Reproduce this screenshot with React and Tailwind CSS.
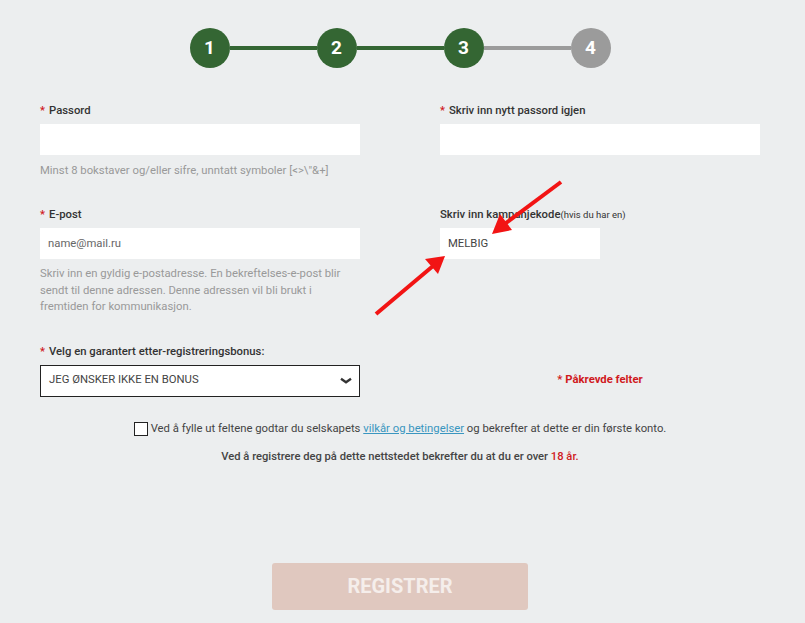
import { useState } from "react"

function Step({ n, done }) {
    return (
        <div className={`w-10 h-10 rounded-full flex items-center justify-center text-white text-[19px] font-bold ${done ? "bg-[#346633]" : "bg-[#9b9b9b]"}`}>
            {n}
        </div>
    )
}

function Label({ children, req = true }) {
    return (
        <div className="h-4 text-[11.3px] leading-4 font-medium text-[#333]">
            {req && <span className="text-[#d0191d] mr-1">*</span>}
            {children}
        </div>
    )
}

export default function App() {
    const [agree, setAgree] = useState(false)

    return (
        <div className="relative w-[805px] h-[623px] bg-[#eceeef] font-['Roboto',_sans-serif] overflow-hidden">
            <div className="w-[800px]">
                <div className="flex items-center justify-center pt-7">
                    <Step n="1" done />
                    <div className="w-[87px] h-1 bg-[#346633]" />
                    <Step n="2" done />
                    <div className="w-[87px] h-1 bg-[#346633]" />
                    <Step n="3" done />
                    <div className="w-[87px] h-1 bg-[#9b9b9b]" />
                    <Step n="4" />
                </div>

                <div className="grid grid-cols-[320px_320px] gap-x-20 px-10 mt-[35px]">
                    <div>
                        <Label>Passord</Label>
                        <input type="password" className="block w-full h-[31px] mt-[5px] bg-white outline-none px-2" />
                        <div className="mt-2 text-[11.3px] leading-4 text-[#999]">Minst 8 bokstaver og/eller sifre, unntatt symboler [&lt;&gt;\"&amp;+]</div>
                    </div>
                    <div>
                        <Label>Skriv inn nytt passord igjen</Label>
                        <input type="password" className="block w-full h-[31px] mt-[5px] bg-white outline-none px-2" />
                    </div>

                    <div className="mt-7">
                        <Label>E-post</Label>
                        <input placeholder="name@mail.ru" className="block w-full h-[31px] mt-[5px] bg-white outline-none px-2 text-[11.3px] text-[#555] placeholder:text-[#666]" />
                        <div className="mt-[7px] text-[11.3px] leading-[16.5px] text-[#999]">
                            Skriv inn en gyldig e-postadresse. En bekreftelses-e-post blir sendt til denne adressen. Denne adressen vil bli brukt i fremtiden for kommunikasjon.
                        </div>
                    </div>
                    <div className="mt-7">
                        <div className="h-4 text-[11.3px] leading-4 font-medium text-[#333]">
                            Skriv inn kampanjekode<span className="text-[9.5px] font-normal">(hvis du har en)</span>
                        </div>
                        <input defaultValue="MELBIG" className="block w-[160px] h-[31px] mt-[5px] bg-white outline-none px-2 text-[11.3px] text-[#444]" />
                    </div>

                    <div className="mt-7">
                        <Label>Velg en garantert etter-registreringsbonus:</Label>
                        <div className="mt-[5px] h-8 border border-[#222] bg-white flex items-center justify-between px-2">
                            <span className="text-[11.3px] text-[#444]">JEG ØNSKER IKKE EN BONUS</span>
                            <svg width="12" height="8" viewBox="0 0 12 8" className="mr-[-1px]">
                                <path d="M1 1.8 L6 5.2 L11 1.8" fill="none" stroke="#333" strokeWidth="2.4" />
                            </svg>
                        </div>
                    </div>
                    <div className="mt-7 flex items-end justify-center">
                        <div className="h-8 flex items-center text-[11.3px] font-bold text-[#d0191d]">* Påkrevde felter</div>
                    </div>
                </div>

                <div className="flex items-center justify-center mt-[24px] text-[11.3px] leading-4 text-[#444]">
                    <button
                        onClick={() => setAgree(!agree)}
                        className="w-[14px] h-[14px] border-[1.5px] border-[#222] bg-white mr-[3px] flex items-center justify-center"
                    >
                        {agree && <span className="w-2 h-2 bg-[#346633]" />}
                    </button>
                    <span>
                        Ved å fylle ut feltene godtar du selskapets <a href="#" className="text-[#3a96c0] underline">vilkår og betingelser</a> og bekrefter at dette er din første konto.
                    </span>
                </div>
                <div className="text-center mt-3 text-[11.2px] leading-4 font-medium text-[#444]">
                    Ved å registrere deg på dette nettstedet bekrefter du at du er over <span className="text-[#d0191d]">18 år.</span>
                </div>

                <div className="flex justify-center mt-[98px]">
                    <button className="w-64 h-[47px] rounded-[3px] bg-[#e0c8bf] text-[#f5eeeb] text-[20px] font-bold">
                        REGISTRER
                    </button>
                </div>
            </div>

            <svg className="absolute left-0 top-0 pointer-events-none" width="805" height="623">
                <line x1="561" y1="182" x2="506" y2="223" stroke="#f21414" strokeWidth="4" />
                <polygon points="492,234 500,214 512,230" fill="#f21414" />
                <line x1="376" y1="314" x2="433" y2="266" stroke="#f21414" strokeWidth="4" />
                <polygon points="445,256 438,274 425,259" fill="#f21414" />
            </svg>
        </div>
    )
}
